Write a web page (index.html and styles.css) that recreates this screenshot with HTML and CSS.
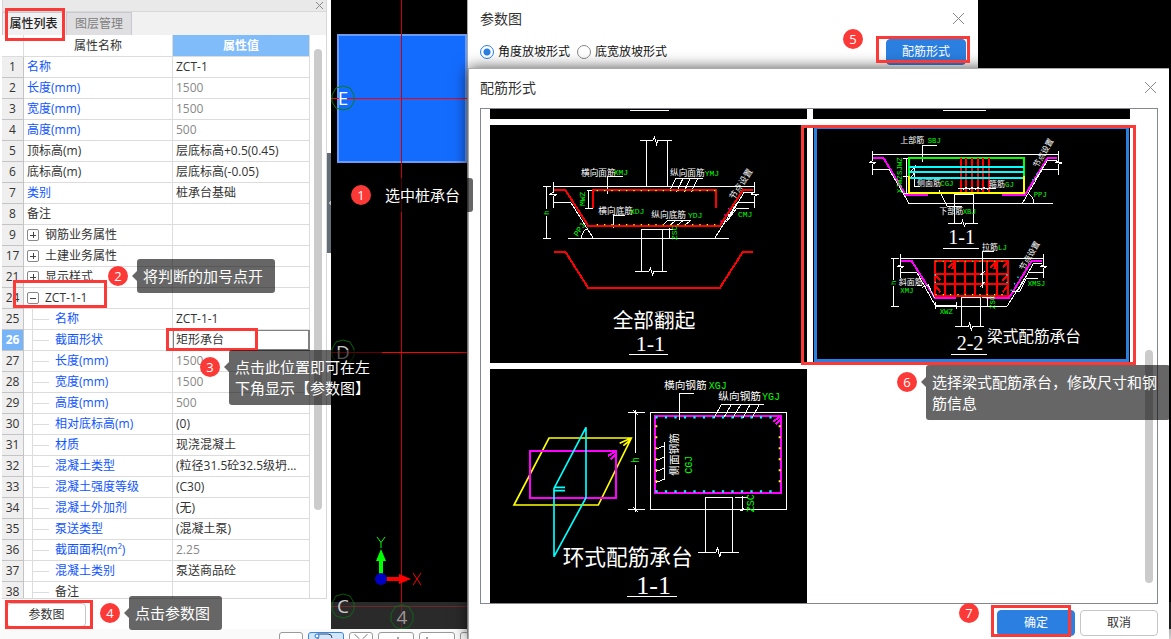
FILE: index.html
```html
<!DOCTYPE html>
<html lang="zh-CN">
<head>
<meta charset="utf-8">
<title>属性列表</title>
<link rel="stylesheet" href="styles.css">
</head>
<body>
<div class="app">
  <div class="workspace">
    <aside class="panel">
      <div class="dock">
        <div class="dock-bar"><button class="dock-close" aria-label="关闭面板"><svg viewBox="0 0 7 7"><path d="M0 0L7 7M7 0L0 7"/></svg></button></div>
        <div class="tabs" role="tablist">
          <button class="tab tab-on" role="tab" aria-selected="true">属性列表</button>
          <button class="tab" role="tab" aria-selected="false">图层管理</button>
        </div>
        <div class="sheet">
          <table class="props">
            <colgroup><col class="c-num"><col class="c-name"><col class="c-value"></colgroup>
            <thead><tr><th></th><th>属性名称</th><th class="th-on">属性值</th></tr></thead>
            <tbody>
              <tr><th>1</th><td class="link">名称</td><td>ZCT-1</td></tr>
              <tr><th>2</th><td class="link">长度(mm)</td><td class="dim">1500</td></tr>
              <tr><th>3</th><td class="link">宽度(mm)</td><td class="dim">1500</td></tr>
              <tr><th>4</th><td class="link">高度(mm)</td><td class="dim">500</td></tr>
              <tr><th>5</th><td>顶标高(m)</td><td>层底标高+0.5(0.45)</td></tr>
              <tr><th>6</th><td>底标高(m)</td><td>层底标高(-0.05)</td></tr>
              <tr><th>7</th><td class="link">类别</td><td>桩承台基础</td></tr>
              <tr><th>8</th><td>备注</td><td></td></tr>
              <tr><th>9</th><td><div class="group"><button class="twist plus" aria-label="展开"></button>钢筋业务属性</div></td><td></td></tr>
              <tr><th>17</th><td><div class="group"><button class="twist plus" aria-label="展开"></button>土建业务属性</div></td><td></td></tr>
              <tr><th>21</th><td><div class="group"><button class="twist plus" aria-label="展开"></button>显示样式</div></td><td></td></tr>
              <tr><th>24</th><td><div class="group"><button class="twist" aria-label="收起"></button>ZCT-1-1</div></td><td></td></tr>
              <tr><th>25</th><td class="leaf link">名称</td><td>ZCT-1-1</td></tr>
              <tr class="current"><th>26</th><td class="leaf link">截面形状</td><td>矩形承台</td></tr>
              <tr><th>27</th><td class="leaf link">长度(mm)</td><td class="dim">1500</td></tr>
              <tr><th>28</th><td class="leaf link">宽度(mm)</td><td class="dim">1500</td></tr>
              <tr><th>29</th><td class="leaf link">高度(mm)</td><td class="dim">500</td></tr>
              <tr><th>30</th><td class="leaf link">相对底标高(m)</td><td>(0)</td></tr>
              <tr><th>31</th><td class="leaf link">材质</td><td>现浇混凝土</td></tr>
              <tr><th>32</th><td class="leaf link">混凝土类型</td><td>(粒径31.5砼32.5级坍...</td></tr>
              <tr><th>33</th><td class="leaf link">混凝土强度等级</td><td>(C30)</td></tr>
              <tr><th>34</th><td class="leaf link">混凝土外加剂</td><td>(无)</td></tr>
              <tr><th>35</th><td class="leaf link">泵送类型</td><td>(混凝土泵)</td></tr>
              <tr><th>36</th><td class="leaf link">截面面积(m²)</td><td class="dim">2.25</td></tr>
              <tr><th>37</th><td class="leaf link">混凝土类别</td><td>泵送商品砼</td></tr>
              <tr><th>38</th><td class="leaf">备注</td><td></td></tr>
            </tbody>
          </table>
          <div class="track"><div class="thumb"></div></div>
        </div>
        <div class="panel-foot"><button class="btn">参数图</button></div>
      </div>
      <div class="splitter"><button class="grip" aria-label="收起面板"></button></div>
    </aside>

    <main class="canvas">
      <svg class="scene" aria-label="平面视图">
        <g transform="translate(-331 0)">
          <rect x="338" y="35" width="128" height="127" fill="#146cff" stroke="#6b9cf5" stroke-width="2"/>
          <path d="M401.500 0V629" stroke="#cc0000" stroke-width="1" shape-rendering="crispEdges"/>
          <path d="M331 98.500H471M331 352.500H471M331 606.500H471" stroke="#f00" shape-rendering="crispEdges"/>
          <rect x="331" y="602" width="900" height="27" fill="#383838" fill-opacity=".75"/>
          <g fill="none" stroke="#087d12">
            <path id="ring" d="M343 86L350 88L354 95V102L350 108L343 110L336 108L332 102V95L336 88Z"/>
            <use href="#ring" y="254" opacity=".8"/><use href="#ring" y="508" opacity=".7"/><use href="#ring" x="59" y="519" opacity=".7"/>
          </g>
          <g class="axis-text">
            <text x="343" y="105" fill="#fff">E</text><text x="343" y="359" fill="#ccc">D</text>
            <text x="343" y="613" fill="#ccc">C</text><text x="402" y="624" fill="#999">4</text>
          </g>
          <path d="M381 579V560" stroke="#0f0" stroke-width="4"/><path d="M381 549L376 561H386Z" fill="#0f0"/>
          <path d="M381 579H400" stroke="#f00" stroke-width="4"/><path d="M411 579L399 574V584Z" fill="#f00"/>
          <circle cx="381" cy="579" r="6" fill="#0000c0"/>
          <path d="M377 537L381 542.500L385 537M381 542.500V548" fill="none" stroke="#0f0"/>
          <path d="M413 573L421 585M421 573L413 585" stroke="#f00"/>
        </g>
      </svg>
    </main>
  </div>
  <footer class="status">
    <button class="tool tool-s" aria-label="工具一"></button><button class="tool tool-on" aria-label="工具二"><svg viewBox="0 0 24 6"><path d="M4 1H14Q18 1 18 5M4 3V6" fill="none" stroke="#345"/><circle cx="3" cy="3" r="2" fill="#fff" stroke="#1d74dd"/></svg></button><button class="tool tool-s" aria-label="工具三"><svg viewBox="0 0 24 6"><path d="M5 1L10 6M19 1L14 6" stroke="#666"/></svg></button><button class="tool" aria-label="工具四"><svg viewBox="0 0 24 6"><path d="M14 4V6" stroke="#444"/></svg></button><button class="tool" aria-label="工具五"><svg viewBox="0 0 24 6"><path d="M2 4V6" stroke="#444"/></svg></button><button class="tool" aria-label="工具六"></button>
  </footer>

  <section class="dialog dialog-param" aria-label="参数图">
    <header class="dialog-head"><h2>参数图</h2><button class="close" aria-label="关闭"><svg viewBox="0 0 11 11"><path d="M0 0L11 11M11 0L0 11"/></svg></button></header>
    <div class="param-row">
      <label><input type="radio" name="slope" checked>角度放坡形式</label>
      <label><input type="radio" name="slope">底宽放坡形式</label>
      <button class="btn btn-primary">配筋形式</button>
    </div>
  </section>

  <section class="dialog dialog-rebar" aria-label="配筋形式">
    <header class="dialog-head"><h2>配筋形式</h2><button class="close" aria-label="关闭"><svg viewBox="0 0 11 11"><path d="M0 0L11 11M11 0L0 11"/></svg></button></header>
    <div class="frame">
      <div class="gallery">
        <div class="tile"><svg viewBox="30 12 951 30"><path class="w" d="M450 16H567"/></svg></div>
        <div class="tile"><svg viewBox="24 12 951 30"><path class="w" d="M414 16H543"/></svg></div>

        <div class="tile">
          <svg viewBox="30 60 951 714">
            <g class="w">
              <path d="M480 106H518L523 96L530 118L534 106H576M500 106V244M562 106V244M189 244H213M220 244H824M220 231V262L208 268H230L220 274V308M824 231V262L812 268H834L824 274V308M220 292H272L340 400M824 292H772L704 400M264 400H748M792 262H824M792 262L740 350M200 244V312M200 332V401M189 401H213M484 400V374H548V499M484 400V499M465 499H507L511 489L518 510L522 499H561M320 256H340M326 256V310M316 310H338M382 266V214H430M400 368V331H436M586 220H669M587 220L568 258M609 220L590 260M631 220L612 260M654 220L633 260M562 346H633M564 346L546 362M587 346L569 362M610 346L590 362M633 346L612 362M550 374H580M568 370V400M304 400Q306 380 320 372M770 310H806M770 310L740 350H724M760 330L740 326"/>
            </g>
            <g class="r"><path d="M222 255H256L324 362H720L789 255H819M340 309V255H708V309M222 440H256L324 548H720L789 440H819"/></g>
            <g class="dots" stroke="#ff0"><path d="M350 257H706M350 359H706"/></g>
            <path d="M722 350L756 294" class="dots" stroke="#f0f"/>
            <g class="lab"><text x="303" y="212">横向面筋</text><text x="570" y="214">纵向面筋</text><text x="355" y="328">横向底筋</text><text x="514" y="340">纵向底筋</text><text transform="translate(762 286) rotate(-57)">节点设置</text></g>
            <g class="code"><text x="401" y="210">XMJ</text><text x="674" y="213">YMJ</text><text x="450" y="327">XDJ</text><text x="624" y="339">YDJ</text><text x="774" y="335">CMJ</text><text transform="translate(315 303) rotate(-90)">MWZ</text><text transform="translate(206 330) rotate(-90)">h</text><text transform="translate(293 396) rotate(-57)">PPJ</text><text transform="translate(592 405) rotate(-90)">ZSC</text></g>
            <g class="caption"><text x="398" y="669" font-size="62">全部翻起</text><text class="num" x="511" y="739" text-anchor="middle" font-size="66">1-1</text></g>
            <path class="w" d="M447 748H564"/>
          </svg>
        </div>

        <div class="tile tile-on">
          <svg viewBox="24 60 951 714">
            <g class="m"><path d="M202 158H235L302 270H369M591 270H660L728 158H757M287 468H320L390 579H454M543 579H612L680 468H712"/></g>
            <g class="w"><path d="M202 148H761M202 138V168L192 173H213L202 178V210M761 138V168L750 173H772L761 178V210M202 193H252L312 295H744M652 295L712 193H761M728 166H757M728 166L690 225M352 171V121H397M294 160H312M304 160V265M294 213H312M294 265H312M312 183H329V245H345M318 200L332 180M318 218L332 198M402 255L426 303H471M448 355V268H506V355M429 355H470L473 346L478 364L482 355H519M460 250H572M475 254L485 246M493 254L503 246M511 254L521 246M529 254L539 246M545 254L555 246M670 266Q686 276 686 294"/>
            <path d="M287 460H716M287 447V480L276 485H297L287 490V518M716 447V480L705 485H726L716 490V518M257 460H281M266 460V526M266 544V604M257 604H281M287 503H336L392 604H606L670 503H716M686 474H712M686 474L640 555M532 548V440H567M526 510L539 500M526 545L539 530M392 590V613M392 601H455M455 590V613M469 664V577H527V664M450 664H491L494 654L499 675L503 664H537M530 577H566M548 577V604M352 547L370 540L388 578M336 540H352M698 520H664L645 558H620"/></g>
            <path d="M312 265V159H657V265" stroke="#0f0" stroke-width="6" fill="none"/>
            <path d="M468 159V264M483 159V264M501 159V264M519 159V264M534 159V264M552 159V264" class="r"/>
            <path d="M312 186H657M312 201H657M312 219H657" stroke="#0ff" stroke-width="6" fill="none"/>
            <path d="M312 213V264H657V213" stroke="#ff0" stroke-width="6" fill="none"/>
            <g class="r"><path d="M391 468H609V573H391ZM421 468V573M451 468V573M481 468V573M511 468V573M547 468V573M577 468V573M391 507H609M391 537H609M430 488L450 470M442 492L450 470M556 488L575 470M568 492L575 470M594 488L609 470M391 510L407 526M391 543L407 562M609 510L592 526M609 543L592 562"/></g>
            <path class="w" d="M532 548V440M526 510L539 500M526 545L539 530M460 250H572M475 254L485 246M493 254L503 246M511 254L521 246M529 254L539 246M545 254L555 246"/>
            <g class="dots"><path d="M391 469H609" stroke="#0f0"/><path d="M391 569H609" stroke="#ff0"/><path d="M391 508V550M606 508V550M640 515L615 562M697 205L674 238" stroke="#0ff"/></g>
            <g class="lab sm"><text x="286" y="115">上部筋</text><text x="336" y="244">侧面筋</text><text x="552" y="247">箍筋</text><text x="403" y="328">下部筋</text><text x="531" y="436">拉筋</text><text x="281" y="541">斜面筋</text><text transform="translate(698 190) rotate(-60)">节点设置</text><text transform="translate(657 498) rotate(-60)">节点设置</text></g>
            <g class="code sm"><text x="368" y="115">SBJ</text><text x="406" y="244">CGJ</text><text x="600" y="247">GJ</text><text x="473" y="328">XBJ</text><text x="686" y="276">PPJ</text><text x="579" y="436">LJ</text><text x="286" y="564">XMJ</text><text x="668" y="543">XMSJ</text><text x="404" y="627">XWZ</text><text transform="translate(292 210) rotate(-90)">SJWZ</text><text transform="translate(292 264) rotate(-90)">XJWZ</text><text transform="translate(272 540) rotate(-90)">h</text><text transform="translate(569 612) rotate(-90)">ZSC</text></g>
            <g class="caption"><text class="num" x="470" y="417" text-anchor="middle" font-size="60">1-1</text><text class="num" x="495" y="736" text-anchor="middle" font-size="60">2-2</text><text x="546" y="712" font-size="47">梁式配筋承台</text></g>
            <path class="w" d="M414 430H522M438 748H546"/>
          </svg>
        </div>

        <div class="tile">
          <svg viewBox="15 12 951 714">
            <path d="M192 219H439L340 420H87ZM439 219L404 235M436 225L415 242" stroke="#ff0" stroke-width="5" fill="none"/>
            <g class="m"><path d="M135 258H393V399H135ZM393 258L369 273M393 266L378 283M511 153H888V384H511ZM888 153L864 170M886 163L873 178"/></g>
            <path d="M303 187V398L207 575V370ZM207 367H240M207 377H240" stroke="#0ff" stroke-width="5" fill="none"/>
            <g class="w"><path d="M497 142H905V433H497ZM429 142H480M429 433H480M451 136V265M451 300V440M444 136L459 150M444 426L459 440M583 165V85H628M709 119H837M709 119L687 158M739 119L716 158M767 119L744 158M795 119L774 158M823 119L801 158M539 231V342L514 352M539 242L514 252M539 276L514 286M539 309L514 319M661 561V397H743V561M639 562H693L698 548L704 577L708 562H762M749 397H789M773 394V438M767 438L778 428"/></g>
            <g fill="none" stroke="#0ff" stroke-width="7" stroke-dasharray="7 21.500"><path d="M511 157H880M511 379H880"/></g>
            <g fill="none" stroke="#ff0" stroke-width="6" stroke-dasharray="6 27"><path d="M514 181V360M884 181V360"/></g>
            <g class="lab lg"><text x="537" y="72">横向钢筋</text><text x="700" y="106">纵向钢筋</text><text transform="translate(580 332) rotate(-90)">侧面钢筋</text></g>
            <g class="code lg"><text x="671" y="72">XGJ</text><text x="831" y="105">YGJ</text><text transform="translate(621 326) rotate(-90)">CGJ</text><text transform="translate(461 294) rotate(-90)">h</text><text transform="translate(807 442) rotate(-90)">ZSC</text></g>
            <g class="caption"><text x="233" y="599" font-size="65">环式配筋承台</text><text class="num" x="506" y="686" text-anchor="middle" font-size="78">1-1</text></g>
            <path class="w" d="M426 694H576"/>
          </svg>
        </div>
      </div>
      <div class="track"><div class="thumb"></div></div>
    </div>
    <div class="dialog-foot"><button class="btn btn-primary">确定</button><button class="btn">取消</button></div>
  </section>

  <div class="notes">
    <div class="mark mark-tab"></div><div class="mark mark-node"></div><div class="mark mark-shape"></div><div class="mark mark-param"></div>
    <div class="mark mark-rebar"></div><div class="mark mark-tile"></div><div class="mark mark-ok"></div>
    <div class="step step-1">1</div><div class="step step-2">2</div><div class="step step-3">3</div><div class="step step-4">4</div><div class="step step-5">5</div><div class="step step-6">6</div><div class="step step-7">7</div>
    <div class="tip tip-1">选中桩承台</div>
    <div class="tip tip-2">将判断的加号点开</div>
    <div class="tip tip-3">点击此位置即可在左下角显示【参数图】</div>
    <div class="tip tip-4">点击参数图</div>
    <div class="tip tip-6">选择梁式配筋承台，修改尺寸和钢筋信息</div>
  </div>
</div>
</body>
</html>
```

FILE: styles.css
```css
* { box-sizing: border-box; }
body {
  margin: 0;
  font: 12px/20px "Open Sans", "Noto Sans CJK SC", sans-serif;
  color: #333;
}
button { font: inherit; color: inherit; padding: 0; margin: 0; border: 0; background: none; }
.app { position: relative; display: flex; flex-direction: column; height: 100vh; overflow: hidden; background: #fafafa; }
.workspace { flex: 1; min-height: 0; display: flex; }

/* property panel */
.panel { width: 331px; display: flex; background: #fff; }
.dock { flex: 1; min-width: 0; display: flex; flex-direction: column; padding-left: 2px; }
.dock-bar { height: 12px; display: flex; justify-content: flex-end; align-items: center; padding-right: 3px; background: #e9e9e9; border: 1px solid #d8d8d8; border-top: 0; }
.dock-close { display: flex; width: 7px; height: 7px; }
.dock-close svg, .close svg { width: 100%; height: 100%; stroke: #888; overflow: visible; }
.tabs { display: flex; gap: 1px; height: 23px; background: #f1f1f1; border-right: 1px solid #d8d8d8; }
.tab { width: 66px; border: 1px solid #c8c9d0; border-bottom: 0; background: #dfdfe2; color: #808080; }
.tab-on { width: 63px; background: #f1f1f1; color: #222; font-weight: 500; }
.sheet { flex: 1; min-height: 0; overflow: hidden; display: flex; border: 1px solid #d8d8d8; border-width: 0 1px 1px 0; }
.props { width: 308px; border-collapse: separate; border-spacing: 0; table-layout: fixed; align-self: flex-start; }
.c-num { width: 22px; }
.c-name { width: 149px; }
.props tr { height: 21px; }
.props th, .props td { height: 21px; padding: 0 0 0 3px; line-height: 20px; border-right: 1px solid #dcdcdc; border-bottom: 1px solid #dcdcdc; white-space: nowrap; overflow: hidden; text-align: left; font-weight: 400; }
.props thead th { height: 22px; line-height: 21px; text-align: center; padding: 0; }
.props thead .th-on { background: #80bbfa; color: #fff; font-weight: 700; }
.props tbody th { padding: 0; text-align: center; background: #efefef; border-color: #c4c4c4; }
.props .link { color: #0f55ff; }
.props .dim { color: #888; }
.props .leaf { padding-left: 31px; background: linear-gradient(#dcdcdc, #dcdcdc) 8px 0 / 1px 100% no-repeat, linear-gradient(#dcdcdc, #dcdcdc) 9px 10px / 16px 1px no-repeat; }
.props .current th { background: #78b4f8; color: #fff; font-weight: 700; }
.props .current td:last-child { box-shadow: inset 0 0 0 1px #808080; border-color: #808080; }
.group { display: flex; align-items: center; gap: 6px; }
.twist { width: 12px; height: 12px; border: 1px solid #888; border-radius: 2px; background: linear-gradient(#444, #444) center / 6px 1px no-repeat; }
.plus { background: linear-gradient(#444, #444) center / 6px 1px no-repeat, linear-gradient(#444, #444) center / 1px 6px no-repeat; }
.track { flex: 1; display: flex; justify-content: center; padding-top: 14px; }
.thumb { width: 8px; height: 461px; border-radius: 4px; background: #cbcbcb; }
.panel-foot { height: 30px; padding: 4px 5px; }
.btn { width: 79px; height: 24px; border: 1px solid #c6c6c6; border-radius: 4px; background: #fff; }
.btn-primary { border-color: #2b7fe1; background: #2b7fe1; color: #fff; }
.splitter { width: 4px; display: flex; padding-top: 153px; }
.grip { width: 4px; height: 100px; background: #626d78 conic-gradient(from 45deg at 0 50%, #bbb 90deg, transparent 0) center / 3px 6px no-repeat; }

/* model view */
.canvas { flex: 1; min-width: 0; background: #000; }
.scene { display: block; width: 100%; height: 100%; }
.axis-text { font: 19px "Open Sans", sans-serif; text-anchor: middle; }
.status { height: 10px; display: flex; gap: 5px; padding: 3px 0 0 279px; background: #fafafa; overflow: hidden; }
.tool { flex: none; width: 36px; height: 24px; display: flex; align-items: flex-start; justify-content: center; border: 1px solid #999; border-radius: 3px; background: #fff; }
.tool-s { width: 24px; }
.tool svg { width: 24px; height: 6px; }
.tool-on { border-color: #3a86e4; background: #d4e6fb; }

/* dialogs */
.dialog { position: absolute; display: flex; flex-direction: column; background: #fff; border-left: 1px solid #aaa; }
.dialog-param { left: 467px; top: 0; width: 511px; bottom: 0; padding: 7px 12px 0 12px; }
.dialog-rebar { left: 468px; right: 2px; top: 68px; bottom: 0; padding: 7px 11px 3px; border-top: 1px solid #aaa; box-shadow: 0 0 14px rgba(0, 0, 0, .7); }
.dialog-head { display: flex; align-items: center; justify-content: space-between; height: 23px; }
.dialog-head h2 { margin: 0; font-size: 14px; font-weight: 400; }
.close { display: flex; width: 11px; height: 11px; margin-right: 2px; }
.param-row { display: flex; align-items: center; gap: 7px; height: 26px; margin-top: 9px; color: #111; }
.param-row label { display: flex; align-items: center; gap: 4px; }
.param-row input { appearance: none; width: 14px; height: 14px; margin: 0; border: 1px solid #888; border-radius: 50%; background: #fff; }
.param-row input:checked { border-color: #2b7fe1; background: radial-gradient(#2b7fe1 3px, #fff 4px); }
.param-row .btn { width: 80px; height: 26px; margin-left: auto; }
.frame { flex: 1; min-height: 0; display: flex; margin-top: 9px; padding-left: 9px; border: 1px solid #828790; overflow: hidden; }
.gallery { flex: 1; display: grid; grid-template-columns: 1fr 1fr; grid-template-rows: 10px 238px 238px; gap: 6px; }
.tile { position: relative; background: #000; overflow: hidden; }
.tile svg { display: block; width: 100%; height: 100%; }
.tile-on::after { content: ""; position: absolute; inset: 1px; border: 3px solid #2b7fe1; }
.frame .track { flex: none; width: 27px; padding: 241px 0 0 15px; justify-content: flex-start; }
.frame .thumb { height: 233px; }
.dialog-foot { display: flex; justify-content: flex-end; gap: 5px; padding-top: 6px; }
.dialog-foot .btn { width: 78px; height: 26px; }

/* section drawings */
.w, .m, .r { fill: none; stroke: #fff; stroke-width: 3; shape-rendering: crispEdges; }
.m { stroke: #f0f; stroke-width: 6; }
.r { stroke: #f00; stroke-width: 6; }
.dots { fill: none; stroke-width: 4; stroke-dasharray: 4 18; }
.lab { font: 26px "Noto Sans CJK SC", sans-serif; fill: #fff; }
.code { font: 24px "Liberation Mono", monospace; fill: #0f0; }
.lab.sm { font-size: 24px; }
.code.sm { font-size: 22px; }
.lab.lg { font-size: 32px; }
.code.lg { font-size: 30px; }
.caption { font-family: "Noto Sans CJK SC", sans-serif; fill: #fff; }
.num { font-family: "Liberation Serif", serif; }

/* tutorial callouts */
.notes { position: absolute; inset: 0; pointer-events: none; }
.mark { position: absolute; border: 3px solid #fb3a37; }
.mark-tab { left: 5px; top: 8px; width: 60px; height: 33px; }
.mark-node { left: 13px; top: 280px; width: 94px; height: 28px; }
.mark-shape { left: 166px; top: 328px; width: 92px; height: 23px; }
.mark-param { left: 5px; top: 600px; width: 88px; height: 29px; }
.mark-rebar { left: 876px; top: 36px; width: 94px; height: 27px; }
.mark-tile { left: 801px; top: 125px; width: 335px; height: 240px; }
.mark-ok { left: 991px; top: 605px; width: 80px; height: 32px; }
.step { position: absolute; width: 20px; height: 20px; border-radius: 50%; background: #fb3a37; color: #fff; text-align: center; font-size: 13px; line-height: 20px; }
.step-1 { left: 351px; top: 185px; }
.step-2 { left: 108px; top: 266px; }
.step-3 { left: 200px; top: 357px; }
.step-4 { left: 100px; top: 603px; }
.step-5 { left: 843px; top: 29px; }
.step-6 { left: 897px; top: 372px; }
.step-7 { left: 959px; top: 603px; }
.tip { position: absolute; padding: 6px 6px 7px; border-radius: 3px; background: rgba(0, 0, 0, .6); color: #fff; font: 15px/21px "Noto Sans CJK SC", sans-serif; }
.tip::before { content: ""; position: absolute; right: 100%; top: 12px; border: 5px solid transparent; border-left: 0; border-right-color: rgba(0, 0, 0, .6); }
.tip-1 { left: 379px; top: 178px; width: 94px; }
.tip-2 { left: 137px; top: 259px; width: 138px; }
.tip-3 { left: 229px; top: 350px; width: 153px; }
.tip-4 { left: 129px; top: 596px; width: 93px; }
.tip-6 { left: 926px; top: 365px; width: 244px; }
```
